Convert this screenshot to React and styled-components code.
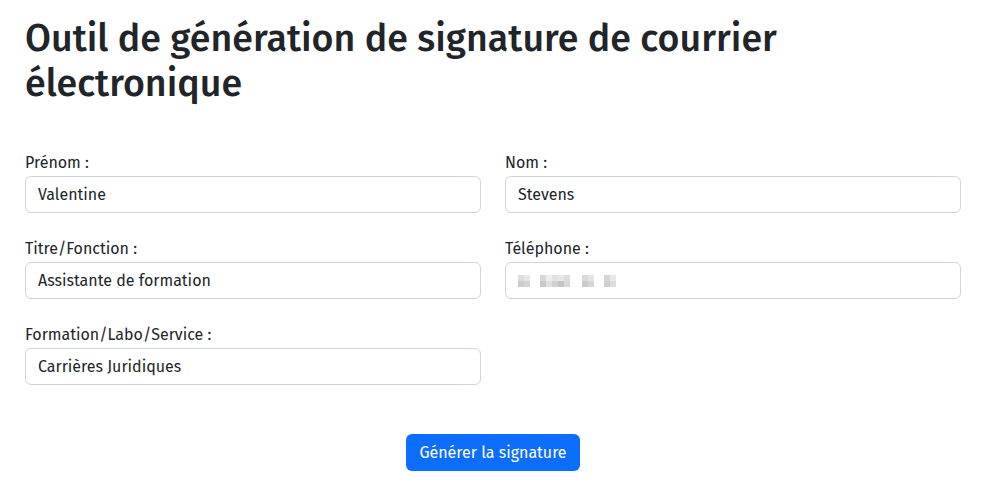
import React from "react";
import styled, { createGlobalStyle } from "styled-components";

const Global = createGlobalStyle`
  * { box-sizing: border-box; }
  body {
    margin: 0;
    background: #fff;
    color: #212529;
    font-family: "Fira Sans", Roboto, "Noto Sans", sans-serif;
    font-size: 16px;
    line-height: 1.5;
  }
`;

const Page = styled.div`
  padding: 16px 25px 24px;
`;

const Title = styled.h1`
  margin: 0 0 45px;
  font-size: 37.6px;
  font-weight: 500;
  line-height: 1.2;
  max-width: 800px;
`;

const Grid = styled.div`
  display: grid;
  grid-template-columns: 1fr 1fr;
  column-gap: 24px;
  row-gap: 24px;
`;

const Field = styled.div`
  display: flex;
  flex-direction: column;
`;

const Label = styled.label`
  font-size: 16px;
  font-weight: 400;
  margin-bottom: 1px;
  line-height: 24px;
`;

const Input = styled.div`
  height: 37px;
  border: 1px solid #ced4da;
  border-radius: 6px;
  padding: 0 12px;
  display: flex;
  align-items: center;
  font-size: 16px;
  font-weight: 400;
`;

const Actions = styled.div`
  display: flex;
  justify-content: center;
  margin-top: 49px;
`;

const Button = styled.button`
  background: #0d6efd;
  color: #fff;
  border: none;
  border-radius: 6px;
  height: 37px;
  padding: 0 13px;
  font-family: inherit;
  font-size: 16px;
  font-weight: 400;
`;

const blocks = [
  [0, 0, "#ddd"], [6, 0, "#e6e6e6"], [0, 6, "#ccc"], [6, 6, "#d4d4d4"],
  [22, 0, "#d8d8d8"], [28, 0, "#eee"], [34, 0, "#e2e2e2"], [40, 0, "#e8e8e8"], [46, 0, "#ddd"],
  [22, 6, "#c8c8c8"], [28, 6, "#e0e0e0"], [34, 6, "#d0d0d0"], [40, 6, "#c4c4c4"], [46, 6, "#d8d8d8"],
  [64, 0, "#dadada"], [70, 0, "#e4e4e4"], [64, 6, "#cacaca"], [70, 6, "#d6d6d6"],
  [86, 0, "#d6d6d6"], [92, 0, "#e8e8e8"], [86, 6, "#cfcfcf"], [92, 6, "#dcdcdc"],
];

function Blurred() {
  return (
    <svg width="98" height="12" viewBox="0 0 98 12">
      {blocks.map(([x, y, c], i) => (
        <rect key={i} x={x} y={y} width="6" height="6" fill={c} />
      ))}
    </svg>
  );
}

export default function App() {
  return (
    <>
      <Global />
      <Page>
        <Title>Outil de génération de signature de courrier électronique</Title>
        <Grid>
          <Field>
            <Label>Prénom :</Label>
            <Input>Valentine</Input>
          </Field>
          <Field>
            <Label>Nom :</Label>
            <Input>Stevens</Input>
          </Field>
          <Field>
            <Label>Titre/Fonction :</Label>
            <Input>Assistante de formation</Input>
          </Field>
          <Field>
            <Label>Téléphone :</Label>
            <Input>
              <Blurred />
            </Input>
          </Field>
          <Field>
            <Label>Formation/Labo/Service :</Label>
            <Input>Carrières Juridiques</Input>
          </Field>
        </Grid>
        <Actions>
          <Button>Générer la signature</Button>
        </Actions>
      </Page>
    </>
  );
}
